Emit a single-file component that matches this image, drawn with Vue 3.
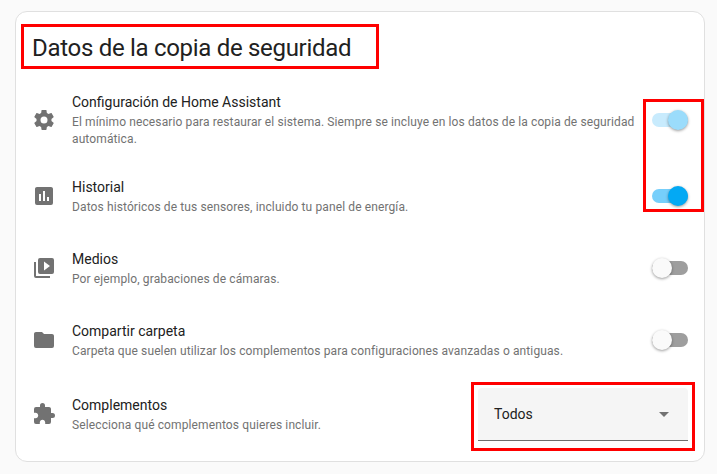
<template>
  <div class="page">
    <section class="card">
      <h2 class="card-title">Datos de la copia de seguridad</h2>
      <div class="list">
        <div v-for="row in rows" :key="row.title" class="row" :class="row.cls">
          <svg class="row-icon" viewBox="0 0 24 24"><path :d="row.icon" /></svg>
          <div class="row-text">
            <div class="row-title">{{ row.title }}</div>
            <div class="row-desc">{{ row.desc }}</div>
          </div>
          <div v-if="row.sw" class="switch" :class="row.sw">
            <span class="track"></span>
            <span class="thumb"></span>
          </div>
          <div v-else class="select">
            <span>Todos</span>
            <span class="arrow"></span>
          </div>
        </div>
      </div>
    </section>
    <div class="mark mark-title"></div>
    <div class="mark mark-switches"></div>
    <div class="mark mark-select"></div>
  </div>
</template>

<script setup>
const rows = [
  {
    title: 'Configuración de Home Assistant',
    desc: 'El mínimo necesario para restaurar el sistema. Siempre se incluye en los datos de la copia de seguridad automática.',
    icon: 'M12,15.5A3.5,3.5 0 0,1 8.5,12A3.5,3.5 0 0,1 12,8.5A3.5,3.5 0 0,1 15.5,12A3.5,3.5 0 0,1 12,15.5M19.43,12.97C19.47,12.65 19.5,12.33 19.5,12C19.5,11.67 19.47,11.34 19.43,11L21.54,9.37C21.73,9.22 21.78,8.95 21.66,8.73L19.66,5.27C19.54,5.05 19.27,4.96 19.05,5.05L16.56,6.05C16.04,5.66 15.5,5.32 14.87,5.07L14.5,2.42C14.46,2.18 14.25,2 14,2H10C9.75,2 9.54,2.18 9.5,2.42L9.13,5.07C8.5,5.32 7.96,5.66 7.44,6.05L4.95,5.05C4.73,4.96 4.46,5.05 4.34,5.27L2.34,8.73C2.21,8.95 2.27,9.22 2.46,9.37L4.57,11C4.53,11.34 4.5,11.67 4.5,12C4.5,12.33 4.53,12.65 4.57,12.97L2.46,14.63C2.27,14.78 2.21,15.05 2.34,15.27L4.34,18.73C4.46,18.95 4.73,19.03 4.95,18.95L7.44,17.94C7.96,18.34 8.5,18.68 9.13,18.93L9.5,21.58C9.54,21.82 9.75,22 10,22H14C14.25,22 14.46,21.82 14.5,21.58L14.87,18.93C15.5,18.67 16.04,18.34 16.56,17.94L19.05,18.95C19.27,19.03 19.54,18.95 19.66,18.73L21.66,15.27C21.78,15.05 21.73,14.78 21.54,14.63L19.43,12.97Z',
    sw: 'on-disabled',
    cls: 'row-first'
  },
  {
    title: 'Historial',
    desc: 'Datos históricos de tus sensores, incluido tu panel de energía.',
    icon: 'M19,3H5C3.89,3 3,3.89 3,5V19A2,2 0 0,0 5,21H19A2,2 0 0,0 21,19V5C21,3.89 20.1,3 19,3M9,17H7V10H9V17M13,17H11V7H13V17M17,17H15V13H17V17Z',
    sw: 'on'
  },
  {
    title: 'Medios',
    desc: 'Por ejemplo, grabaciones de cámaras.',
    icon: 'M4,6H2V20A2,2 0 0,0 4,22H18V20H4V6M20,2H8A2,2 0 0,0 6,4V16A2,2 0 0,0 8,18H20A2,2 0 0,0 22,16V4A2,2 0 0,0 20,2M12,14.5V5.5L18,10L12,14.5Z',
    sw: 'off'
  },
  {
    title: 'Compartir carpeta',
    desc: 'Carpeta que suelen utilizar los complementos para configuraciones avanzadas o antiguas.',
    icon: 'M10,4H4C2.89,4 2,4.89 2,6V18A2,2 0 0,0 4,20H20A2,2 0 0,0 22,18V8C22,6.89 21.1,6 20,6H12L10,4Z',
    sw: 'off'
  },
  {
    title: 'Complementos',
    desc: 'Selecciona qué complementos quieres incluir.',
    icon: 'M20.5,11H19V7C19,5.89 18.1,5 17,5H13V3.5A2.5,2.5 0 0,0 10.5,1A2.5,2.5 0 0,0 8,3.5V5H4A2,2 0 0,0 2,7V10.8H3.5C5,10.8 6.2,12 6.2,13.5C6.2,15 5,16.2 3.5,16.2H2V20A2,2 0 0,0 4,22H7.8V20.5C7.8,19 9,17.8 10.5,17.8C12,17.8 13.2,19 13.2,20.5V22H17A2,2 0 0,0 19,20V16H20.5A2.5,2.5 0 0,0 23,13.5A2.5,2.5 0 0,0 20.5,11Z',
    cls: 'row-last'
  }
]
</script>

<style scoped>
.page {
  position: relative;
  width: 717px;
  height: 474px;
  padding: 11px 12px 0 15px;
  box-sizing: border-box;
  overflow: hidden;
  background: #fafafa;
  font-family: Roboto, "Noto Sans", sans-serif;
}

.card {
  height: 451px;
  box-sizing: border-box;
  background: #fff;
  border: 1px solid #e0e0e0;
  border-radius: 12px;
}

.card-title {
  margin: 0;
  padding: 20px 16px 0;
  height: 52px;
  box-sizing: border-box;
  font-size: 24px;
  line-height: 32px;
  font-weight: 400;
  letter-spacing: -0.3px;
  color: #212121;
}

.list {
  padding-top: 20px;
}

.row {
  display: flex;
  align-items: center;
  height: 72px;
  padding: 0 16px;
}

.row-first {
  margin-bottom: 4px;
}

.row-last {
  height: 76px;
}

.row-icon {
  flex: none;
  width: 24px;
  height: 24px;
  margin-right: 16px;
  fill: #727272;
}

.row-text {
  flex: 1;
  min-width: 0;
  padding-top: 1px;
}

.row-first .row-text {
  padding-top: 0;
}

.row-title {
  font-size: 14px;
  line-height: 20px;
  color: #212121;
}

.row-desc {
  margin-top: 1px;
  font-size: 12px;
  line-height: 19px;
  letter-spacing: 0.115px;
  color: #727272;
}

.row-first .row-desc {
  margin-top: 2px;
  line-height: 17px;
}

.switch {
  position: relative;
  flex: none;
  width: 36px;
  height: 14px;
  margin-left: 16px;
}

.track {
  position: absolute;
  inset: 0;
  border-radius: 7px;
  background: #9e9e9e;
}

.thumb {
  position: absolute;
  top: -3px;
  left: 0;
  width: 20px;
  height: 20px;
  border-radius: 50%;
  background: #fafafa;
  box-shadow: 0 1px 3px rgba(0, 0, 0, 0.4);
}

.on .track {
  background: #76cffb;
}

.on .thumb,
.on-disabled .thumb {
  left: 16px;
}

.on .thumb {
  background: #03a9f4;
}

.on-disabled .track {
  background: #c8ebfd;
}

.on-disabled .thumb {
  background: #9bdcfb;
}

.select {
  flex: none;
  display: flex;
  align-items: center;
  justify-content: space-between;
  box-sizing: border-box;
  width: 210px;
  height: 53px;
  margin-top: 1px;
  padding: 0 19px 0 16px;
  background: #f5f5f5;
  border-bottom: 1px solid #6e6e6e;
  border-radius: 4px 4px 0 0;
  font-size: 14px;
  color: #212121;
}

.arrow {
  width: 0;
  height: 0;
  border-left: 5px solid transparent;
  border-right: 5px solid transparent;
  border-top: 5px solid #727272;
}

.mark {
  position: absolute;
  box-sizing: border-box;
  border: 3px solid #f00;
}

.mark-title {
  left: 21px;
  top: 24px;
  width: 358px;
  height: 45px;
}

.mark-switches {
  left: 643px;
  top: 99px;
  width: 61px;
  height: 113px;
}

.mark-select {
  left: 471px;
  top: 382px;
  width: 224px;
  height: 69px;
}
</style>

<style>
body {
  background: #fafafa;
}
</style>
